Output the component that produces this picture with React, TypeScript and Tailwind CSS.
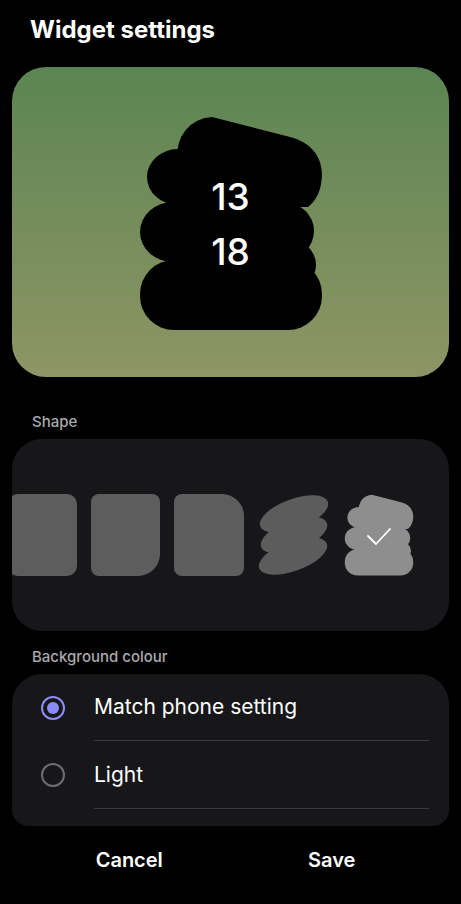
function Blob({ fill, className }: { fill: string; className?: string }) {
  return (
    <svg viewBox="0 0 186 216" className={className} preserveAspectRatio="none">
      <g fill={fill}>
        <path d="M40,44 A36,36 0 0 1 74,2 L152,22 C172,27 183,40 184,58 C184,75 178,86 170,92 L40,92 Z" />
        <ellipse cx="40" cy="62" rx="31" ry="28" />
        <ellipse cx="35" cy="117" rx="33" ry="30" />
        <ellipse cx="148" cy="116" rx="28" ry="28" />
        <ellipse cx="150" cy="150" rx="28" ry="26" />
        <rect x="2" y="145" width="182" height="70" rx="34" />
        <rect x="30" y="40" width="125" height="150" />
      </g>
    </svg>
  );
}

function SlantShape() {
  return (
    <svg viewBox="0 0 72 82" className="w-[72px] h-[82px]">
      <g fill="#5c5c5c">
        <ellipse cx="36" cy="20" rx="36" ry="15" transform="rotate(-20 36 20)" />
        <ellipse cx="36" cy="41" rx="35" ry="15" transform="rotate(-20 36 41)" />
        <ellipse cx="35" cy="62" rx="36" ry="15" transform="rotate(-20 35 62)" />
        <polygon points="16,32 56,17 56,52 16,67" />
      </g>
    </svg>
  );
}

function Radio({ checked }: { checked: boolean }) {
  return checked ? (
    <div className="w-6 h-6 rounded-full border-[2.5px] border-[#8b8cf8] flex items-center justify-center">
      <div className="w-3 h-3 rounded-full bg-[#8b8cf8]" />
    </div>
  ) : (
    <div className="w-6 h-6 rounded-full border-2 border-[#6e6e70]" />
  );
}

export default function App() {
  return (
    <div className="w-full h-[904px] overflow-hidden bg-black text-white font-['Inter','Roboto',sans-serif]">
      {/* Header */}
      <div className="h-[67px] pt-[15px] pl-[30px]">
        <h1 className="text-[24px] leading-[30px] font-bold">Widget settings</h1>
      </div>

      {/* Preview */}
      <div className="mx-3 h-[310px] rounded-[34px] bg-gradient-to-b from-[#5a8552] to-[#8e9565] flex items-center justify-center">
        <div className="relative w-[186px] h-[216px] mt-[2px]">
          <Blob fill="#000" className="absolute inset-0 w-full h-full" />
          <div className="absolute inset-0 flex flex-col items-center justify-center pt-[2px]">
            <span className="text-[37px] leading-[55px] font-medium">13</span>
            <span className="text-[37px] leading-[55px] font-medium">18</span>
          </div>
        </div>
      </div>

      {/* Shape */}
      <div className="pt-[35px] pb-[7px] pl-[32px] text-[15px] leading-[20px] font-medium text-[#a9a9ab]">Shape</div>
      <div className="mx-3 h-[192px] rounded-[30px] bg-[#171719] overflow-hidden flex items-center gap-[14px]">
        <div className="shrink-0 -ml-1 w-[69px] h-[82px] rounded-[10px] bg-[#5d5d5d]" />
        <div className="shrink-0 w-[69px] h-[82px] rounded-[8px] rounded-br-[22px] bg-[#5d5d5d]" />
        <div className="shrink-0 w-[70px] h-[82px] rounded-[8px] rounded-tr-[22px] bg-[#5d5d5d]" />
        <div className="shrink-0">
          <SlantShape />
        </div>
        <div className="shrink-0 relative w-[70px] h-[82px]">
          <Blob fill="#8e8e8e" className="absolute inset-0 w-full h-full" />
          <div className="absolute inset-0 flex items-center justify-center pt-[2px]">
            <svg viewBox="0 0 26 19" className="w-[26px] h-[19px]" fill="none" stroke="#fff" strokeWidth="1.8" strokeLinecap="round" strokeLinejoin="round">
              <polyline points="2,9 10,17 24,2" />
            </svg>
          </div>
        </div>
      </div>

      {/* Background colour */}
      <div className="pt-[16px] pb-[7px] pl-[32px] text-[15px] leading-[20px] font-medium text-[#a9a9ab]">Background colour</div>
      <div className="mx-3 h-[152px] rounded-t-[30px] rounded-b-[16px] bg-[#171719] overflow-hidden">
        <div className="flex items-center pl-[29px]">
          <Radio checked />
          <div className="flex-1 ml-[29px] mr-5 h-[67px] flex items-center border-b border-[#3a3a3c] text-[21px]">
            Match phone setting
          </div>
        </div>
        <div className="flex items-center pl-[29px]">
          <Radio checked={false} />
          <div className="flex-1 ml-[29px] mr-5 h-[68px] flex items-center border-b border-[#3a3a3c] text-[21px]">
            Light
          </div>
        </div>
      </div>

      {/* Buttons */}
      <div className="h-[68px] px-7 flex items-center">
        <button className="flex-1 text-[20px] font-semibold">Cancel</button>
        <button className="flex-1 text-[20px] font-semibold">Save</button>
      </div>
    </div>
  );
}
